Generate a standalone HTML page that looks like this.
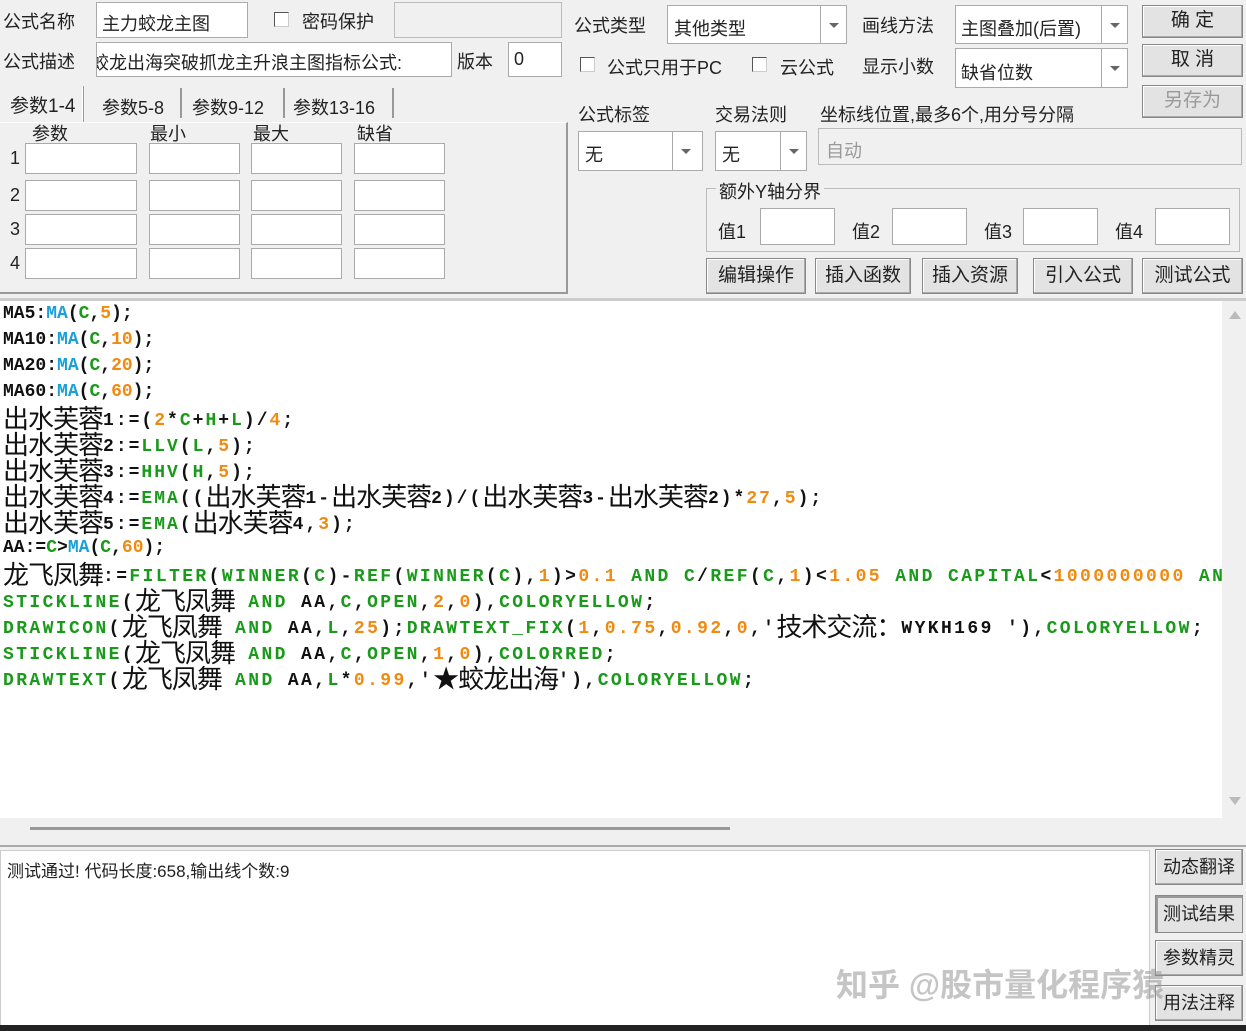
<!DOCTYPE html>
<html><head><meta charset="utf-8"><style>
*{margin:0;padding:0;box-sizing:border-box}
body{width:1246px;height:1031px;background:#f0f0f0;position:relative;overflow:hidden;font-family:"Liberation Sans","Microsoft YaHei","Noto Sans CJK SC",sans-serif;font-size:18px;color:#222}
.a{position:absolute;white-space:nowrap}
.in{position:absolute;background:#fff;border:1px solid #aaa}
.dis{position:absolute;background:#f0f0f0;border:1px solid #bbb}
.btn{position:absolute;background:#e3e3e3;border:1px solid #888;box-shadow:inset -1px -1px 0 #aaa,inset 1px 1px 0 #fff;text-align:center;font-size:19px;line-height:30px}
.cb{position:absolute;width:15px;height:15px;background:#fff;border:1px solid #555;border-right-color:#ccc;border-bottom-color:#ccc}
.dd{position:absolute;right:0;top:0;bottom:0;width:26px;border-left:1px solid #aaa}
.dd:after{content:"";position:absolute;left:8px;top:50%;border:5px solid transparent;border-top:5px solid #666;margin-top:-2px}
.code{position:absolute;left:0;top:301px;width:1222px;height:517px;background:#fff;overflow:hidden;font-family:"Liberation Mono",monospace;font-weight:bold;font-size:18px;color:#111}
.code div{height:26px;line-height:26px;white-space:nowrap;padding-left:3px}
.code div.w{letter-spacing:2.4px}
.code div.v{letter-spacing:2px}
.g{color:#1a9a1a}.b{color:#1a9fd8}.o{color:#f08a10}
.z{font-family:"Noto Sans CJK SC",sans-serif;font-weight:normal;font-size:26px;line-height:20px;letter-spacing:-1px;position:relative;top:3px}
</style></head><body>
<div class="a" style="left:3px;top:8px">公式名称</div>
<div class="in" style="left:96px;top:2px;width:152px;height:36px"><span class="a" style="left:5px;top:7px">主力蛟龙主图</span></div>
<div class="cb" style="left:274px;top:12px"></div>
<div class="a" style="left:302px;top:8px">密码保护</div>
<div class="dis" style="left:394px;top:2px;width:168px;height:36px"></div>
<div class="a" style="left:3px;top:48px">公式描述</div>
<div class="in" style="left:96px;top:42px;width:356px;height:35px;overflow:hidden"><span class="a" style="left:-6px;top:6px">蛟龙出海突破抓龙主升浪主图指标公式:</span></div>
<div class="a" style="left:457px;top:48px">版本</div>
<div class="in" style="left:508px;top:42px;width:54px;height:35px"><span class="a" style="left:5px;top:6px">0</span></div>

<div class="a" style="left:10px;top:91px;font-size:19px">参数1-4</div>
<div class="a" style="left:82px;top:86px;width:2px;height:36px;border-left:1px solid #fff;border-right:1px solid #999"></div>
<div class="a" style="left:102px;top:94px">参数5-8</div>
<div class="a" style="left:180px;top:88px;height:30px;border-left:2px solid #999"></div>
<div class="a" style="left:192px;top:94px">参数9-12</div>
<div class="a" style="left:283px;top:88px;height:30px;border-left:2px solid #999"></div>
<div class="a" style="left:293px;top:94px">参数13-16</div>
<div class="a" style="left:392px;top:88px;height:30px;border-left:2px solid #999"></div>
<div class="a" style="left:0;top:122px;width:568px;height:172px;border-right:2px solid #999;border-bottom:2px solid #999;border-top:1px solid #fff"></div>
<div class="a" style="left:32px;top:120px">参数</div><div class="a" style="left:150px;top:120px">最小</div><div class="a" style="left:253px;top:120px">最大</div><div class="a" style="left:357px;top:120px">缺省</div>
<div class="a" style="left:10px;top:148px">1</div><div class="a" style="left:10px;top:185px">2</div><div class="a" style="left:10px;top:219px">3</div><div class="a" style="left:10px;top:253px">4</div>

<div class="in" style="left:25px;top:143px;width:112px;height:31px"></div><div class="in" style="left:149px;top:143px;width:91px;height:31px"></div><div class="in" style="left:251px;top:143px;width:91px;height:31px"></div><div class="in" style="left:354px;top:143px;width:91px;height:31px"></div>
<div class="in" style="left:25px;top:180px;width:112px;height:31px"></div><div class="in" style="left:149px;top:180px;width:91px;height:31px"></div><div class="in" style="left:251px;top:180px;width:91px;height:31px"></div><div class="in" style="left:354px;top:180px;width:91px;height:31px"></div>
<div class="in" style="left:25px;top:214px;width:112px;height:31px"></div><div class="in" style="left:149px;top:214px;width:91px;height:31px"></div><div class="in" style="left:251px;top:214px;width:91px;height:31px"></div><div class="in" style="left:354px;top:214px;width:91px;height:31px"></div>
<div class="in" style="left:25px;top:248px;width:112px;height:31px"></div><div class="in" style="left:149px;top:248px;width:91px;height:31px"></div><div class="in" style="left:251px;top:248px;width:91px;height:31px"></div><div class="in" style="left:354px;top:248px;width:91px;height:31px"></div>

<div class="a" style="left:574px;top:12px">公式类型</div>
<div class="in" style="left:667px;top:5px;width:180px;height:39px"><span class="a" style="left:6px;top:9px">其他类型</span><div class="dd"></div></div>
<div class="a" style="left:862px;top:12px">画线方法</div>
<div class="in" style="left:955px;top:5px;width:173px;height:39px"><span class="a" style="left:5px;top:9px">主图叠加(后置)</span><div class="dd"></div></div>
<div class="btn" style="left:1142px;top:5px;width:101px;height:33px">确 定</div>
<div class="cb" style="left:580px;top:57px"></div><div class="a" style="left:607px;top:54px">公式只用于PC</div>
<div class="cb" style="left:752px;top:57px"></div><div class="a" style="left:780px;top:54px">云公式</div>
<div class="a" style="left:862px;top:53px">显示小数</div>
<div class="in" style="left:955px;top:48px;width:173px;height:40px"><span class="a" style="left:5px;top:10px">缺省位数</span><div class="dd"></div></div>
<div class="btn" style="left:1142px;top:44px;width:101px;height:33px">取 消</div>
<div class="btn" style="left:1142px;top:85px;width:101px;height:33px;color:#999">另存为</div>
<div class="a" style="left:578px;top:101px">公式标签</div>
<div class="a" style="left:715px;top:101px">交易法则</div>
<div class="a" style="left:820px;top:101px">坐标线位置,最多6个,用分号分隔</div>
<div class="in" style="left:578px;top:131px;width:125px;height:40px"><span class="a" style="left:6px;top:9px">无</span><div class="dd" style="width:30px"></div></div>
<div class="in" style="left:715px;top:131px;width:92px;height:40px"><span class="a" style="left:6px;top:9px">无</span><div class="dd"></div></div>
<div class="dis" style="left:818px;top:128px;width:424px;height:37px"><span class="a" style="left:7px;top:8px;color:#999">自动</span></div>
<div class="a" style="left:706px;top:188px;width:534px;height:64px;border:1px solid #bbb"></div>
<div class="a" style="left:716px;top:178px;background:#f0f0f0;padding:0 3px">额外Y轴分界</div>
<div class="a" style="left:718px;top:218px">值1</div><div class="in" style="left:760px;top:208px;width:75px;height:37px"></div>
<div class="a" style="left:852px;top:218px">值2</div><div class="in" style="left:892px;top:208px;width:75px;height:37px"></div>
<div class="a" style="left:984px;top:218px">值3</div><div class="in" style="left:1023px;top:208px;width:75px;height:37px"></div>
<div class="a" style="left:1115px;top:218px">值4</div><div class="in" style="left:1155px;top:208px;width:75px;height:37px"></div>
<div class="btn" style="left:706px;top:258px;width:100px;height:36px;line-height:34px">编辑操作</div>
<div class="btn" style="left:815px;top:258px;width:96px;height:36px;line-height:34px">插入函数</div>
<div class="btn" style="left:922px;top:258px;width:96px;height:36px;line-height:34px">插入资源</div>
<div class="btn" style="left:1033px;top:258px;width:100px;height:36px;line-height:34px">引入公式</div>
<div class="btn" style="left:1142px;top:258px;width:101px;height:36px;line-height:34px">测试公式</div>

<div class="a" style="left:0;top:298px;width:1246px;height:3px;background:#ccc"></div>
<div class="code">
<div>MA5:<span class="b">MA</span>(<span class="g">C</span>,<span class="o">5</span>);</div>
<div>MA10:<span class="b">MA</span>(<span class="g">C</span>,<span class="o">10</span>);</div>
<div>MA20:<span class="b">MA</span>(<span class="g">C</span>,<span class="o">20</span>);</div>
<div>MA60:<span class="b">MA</span>(<span class="g">C</span>,<span class="o">60</span>);</div>
<div class="v"><span class="z">出水芙蓉</span>1:=(<span class="o">2</span>*<span class="g">C</span>+<span class="g">H</span>+<span class="g">L</span>)/<span class="o">4</span>;</div>
<div class="v"><span class="z">出水芙蓉</span>2:=<span class="g">LLV</span>(<span class="g">L</span>,<span class="o">5</span>);</div>
<div class="v"><span class="z">出水芙蓉</span>3:=<span class="g">HHV</span>(<span class="g">H</span>,<span class="o">5</span>);</div>
<div class="v"><span class="z">出水芙蓉</span>4:=<span class="g">EMA</span>((<span class="z">出水芙蓉</span>1-<span class="z">出水芙蓉</span>2)/(<span class="z">出水芙蓉</span>3-<span class="z">出水芙蓉</span>2)*<span class="o">27</span>,<span class="o">5</span>);</div>
<div class="v"><span class="z">出水芙蓉</span>5:=<span class="g">EMA</span>(<span class="z">出水芙蓉</span>4,<span class="o">3</span>);</div>
<div>AA:=<span class="g">C</span>&gt;<span class="b">MA</span>(<span class="g">C</span>,<span class="o">60</span>);</div>
<div class="w"><span class="z">龙飞凤舞</span>:=<span class="g">FILTER</span>(<span class="g">WINNER</span>(<span class="g">C</span>)-<span class="g">REF</span>(<span class="g">WINNER</span>(<span class="g">C</span>),<span class="o">1</span>)&gt;<span class="o">0.1</span> <span class="g">AND</span> <span class="g">C</span>/<span class="g">REF</span>(<span class="g">C</span>,<span class="o">1</span>)&lt;<span class="o">1.05</span> <span class="g">AND</span> <span class="g">CAPITAL</span>&lt;<span class="o">1000000000</span> <span class="g">AND</span></div>
<div class="w"><span class="g">STICKLINE</span>(<span class="z">龙飞凤舞</span> <span class="g">AND</span> AA,<span class="g">C</span>,<span class="g">OPEN</span>,<span class="o">2</span>,<span class="o">0</span>),<span class="g">COLORYELLOW</span>;</div>
<div class="w"><span class="g">DRAWICON</span>(<span class="z">龙飞凤舞</span> <span class="g">AND</span> AA,<span class="g">L</span>,<span class="o">25</span>);<span class="g">DRAWTEXT_FIX</span>(<span class="o">1</span>,<span class="o">0.75</span>,<span class="o">0.92</span>,<span class="o">0</span>,'<span class="z">技术交流：</span>WYKH169 '),<span class="g">COLORYELLOW</span>;</div>
<div class="w"><span class="g">STICKLINE</span>(<span class="z">龙飞凤舞</span> <span class="g">AND</span> AA,<span class="g">C</span>,<span class="g">OPEN</span>,<span class="o">1</span>,<span class="o">0</span>),<span class="g">COLORRED</span>;</div>
<div class="w"><span class="g">DRAWTEXT</span>(<span class="z">龙飞凤舞</span> <span class="g">AND</span> AA,<span class="g">L</span>*<span class="o">0.99</span>,'<span class="z">★蛟龙出海</span>'),<span class="g">COLORYELLOW</span>;</div>
</div>
<div class="a" style="left:1229px;top:311px;border:6px solid transparent;border-bottom:8px solid #bbb;border-top:0"></div>
<div class="a" style="left:1229px;top:797px;border:6px solid transparent;border-top:8px solid #bbb;border-bottom:0"></div>
<div class="a" style="left:30px;top:827px;width:700px;height:3px;background:#999"></div>
<div class="a" style="left:0;top:845px;width:1246px;height:2px;background:#aaa"></div>
<div class="a" style="left:0;top:850px;width:1150px;height:176px;background:#fff;border:1px solid #ccc"></div>
<div class="a" style="left:7px;top:857px;font-size:17px">测试通过! 代码长度:658,输出线个数:9</div>
<div class="btn" style="left:1155px;top:849px;width:88px;height:36px;font-size:18px;line-height:34px">动态翻译</div>
<div class="btn" style="left:1155px;top:895px;width:88px;height:38px;font-size:18px;line-height:36px;box-shadow:inset 2px 2px 0 #999">测试结果</div>
<div class="btn" style="left:1155px;top:940px;width:88px;height:36px;font-size:18px;line-height:34px">参数精灵</div>
<div class="btn" style="left:1155px;top:985px;width:88px;height:36px;font-size:18px;line-height:34px">用法注释</div>
<div class="a" style="left:836px;top:960px;font-size:32px;color:rgba(150,150,150,.55);font-weight:bold">知乎 @股市量化程序猿</div>
<div class="a" style="left:0;top:1025px;width:1246px;height:6px;background:#222"></div>
</body></html>
